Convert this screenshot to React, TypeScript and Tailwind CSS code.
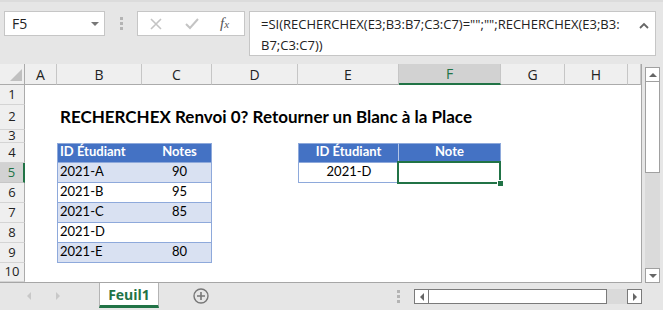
import React from 'react'

const COLS = ['A', 'B', 'C', 'D', 'E', 'F', 'G', 'H', '']
const ROWS = [1, 2, 3, 4, 5, 6, 7, 8, 9, 10]

const values: Record<string, string> = {
  B4: 'ID Étudiant',
  C4: 'Notes',
  E4: 'ID Étudiant',
  F4: 'Note',
  B5: '2021-A',
  C5: '90',
  B6: '2021-B',
  C6: '95',
  B7: '2021-C',
  C7: '85',
  B8: '2021-D',
  B9: '2021-E',
  C9: '80',
  E5: '2021-D',
}

// table formats, written out per cell
const formats: Record<string, string> = {
  B4: 'bg-[#4472c4] text-white font-bold border-t border-b border-l border-[#8ea9db] justify-start pl-[2px]',
  C4: 'bg-[#4472c4] text-white font-bold border-t border-b border-r border-[#8ea9db] justify-center pl-[6px]',
  B5: 'bg-[#d9e1f2] border-b border-l border-[#8ea9db] justify-start pl-[2px]',
  C5: 'bg-[#d9e1f2] border-b border-r border-[#8ea9db] justify-center pl-[6px]',
  B6: 'border-b border-l border-[#8ea9db] justify-start pl-[2px]',
  C6: 'border-b border-r border-[#8ea9db] justify-center pl-[6px]',
  B7: 'bg-[#d9e1f2] border-b border-l border-[#8ea9db] justify-start pl-[2px]',
  C7: 'bg-[#d9e1f2] border-b border-r border-[#8ea9db] justify-center pl-[6px]',
  B8: 'border-b border-l border-[#8ea9db] justify-start pl-[2px]',
  C8: 'border-b border-r border-[#8ea9db] justify-center pl-[6px]',
  B9: 'bg-[#d9e1f2] border-b border-l border-[#8ea9db] justify-start pl-[2px]',
  C9: 'bg-[#d9e1f2] border-b border-r border-[#8ea9db] justify-center pl-[6px]',
  E4: 'bg-[#4472c4] text-white font-bold border-t border-b border-l border-r border-[#8ea9db] border-r-[#b4c6e7] justify-center',
  F4: 'bg-[#4472c4] text-white font-bold border-t border-b border-r border-[#8ea9db] justify-center',
  E5: 'border-b border-l border-[#8ea9db] justify-center',
  F5: 'border-b border-r border-[#8ea9db] justify-center',
}

function Cell({ id }: { id: string }) {
  if (id === 'B2') {
    return (
      <div className="relative z-10 flex items-end pl-[3px] pb-[1px] whitespace-nowrap overflow-visible text-[17px] font-bold text-black">
        RECHERCHEX Renvoi 0? Retourner un Blanc à la Place
      </div>
    )
  }
  return (
    <div className={`relative flex items-end pb-[1px] whitespace-nowrap text-[13px] text-black ${formats[id] || ''}`}>
      {values[id]}
      {id === 'F5' && (
        <>
          <div className="absolute left-[-2px] top-[-2px] right-[-1px] bottom-[-2px] border-2 border-[#217346]" />
          <div className="absolute right-[-4px] bottom-[-5px] w-[7px] h-[7px] bg-[#217346] border border-white" />
        </>
      )}
    </div>
  )
}

function Tri({ dir, className }: { dir: 'up' | 'down' | 'left' | 'right'; className: string }) {
  const pts = {
    up: '0,6 4,2 8,6',
    down: '0,2 8,2 4,6',
    left: '6,0 6,8 2,4',
    right: '2,0 2,8 6,4',
  }[dir]
  return (
    <svg width="8" height="8" viewBox="0 0 8 8" className={className}>
      <polygon points={pts} fill="currentColor" />
    </svg>
  )
}

function Dots() {
  return (
    <div className="flex flex-col gap-[2px]">
      <span className="w-[3px] h-[3px] bg-[#b4b4b4]" />
      <span className="w-[3px] h-[3px] bg-[#b4b4b4]" />
      <span className="w-[3px] h-[3px] bg-[#b4b4b4]" />
    </div>
  )
}

export default function App() {
  return (
    <div className="w-[663px] h-[310px] bg-[#e6e6e6] flex flex-col overflow-hidden font-['Lato',sans-serif]">
      {/* formula bar */}
      <div className="h-[64px] flex items-start pt-[9px] border-t-2 border-[#dcdcdc] font-['Open_Sans',sans-serif]">
        <div className="ml-[4px] w-[101px] h-[25px] bg-white border border-[#c6c6c6] flex items-center justify-between pl-[7px] pr-[5px] text-[14px] text-[#222]">
          F5
          <Tri dir="down" className="text-[#777]" />
        </div>
        <div className="w-[32px] h-[25px] flex items-center justify-center">
          <Dots />
        </div>
        <div className="w-[108px] h-[25px] bg-white border border-[#c6c6c6] flex items-center">
          <svg width="12" height="12" viewBox="0 0 12 12" className="ml-[12px]">
            <path d="M1 1 L11 11 M11 1 L1 11" stroke="#c4c4c4" strokeWidth="1.6" />
          </svg>
          <svg width="14" height="12" viewBox="0 0 14 12" className="ml-[23px]">
            <path d="M1 6 L5 10 L13 1" stroke="#c4c4c4" strokeWidth="2" fill="none" />
          </svg>
          <span className="ml-[21px] font-['Liberation_Serif',serif] italic text-[15px] text-[#555] leading-none">
            f<span className="text-[11px]">x</span>
          </span>
        </div>
        <div className="ml-[4px] w-[407px] h-[45px] bg-white border border-[#c6c6c6] flex justify-between pl-[11px] pr-[6px] pt-[2px]">
          <div className="text-[13px] leading-[21px] text-[#222] whitespace-nowrap">
            =SI(RECHERCHEX(E3;B3:B7;C3:C7)="";"";RECHERCHEX(E3;B3:
            <br />
            B7;C3:C7))
          </div>
          <svg width="10" height="8" viewBox="0 0 10 8" className="mt-[8px]">
            <path d="M1 6 L5 2 L9 6" stroke="#666" strokeWidth="1.8" fill="none" />
          </svg>
        </div>
      </div>

      {/* sheet */}
      <div className="flex h-[219px]">
        <div className="w-[642px] bg-white border-r border-b border-[#a6a6a6] grid grid-cols-[25px_32px_85px_70px_86px_101px_102px_64px_63px_13px] grid-rows-[21px_20px_25px_13px_20px_20px_20px_20px_20px_20px_19px] overflow-hidden">
          <div className="bg-[#efefef] border-r border-b border-[#ababab] flex items-end justify-end pr-[2px] pb-[3px]">
            <svg width="12" height="12" viewBox="0 0 12 12">
              <polygon points="12,0 12,12 0,12" fill="#c0c0c0" />
            </svg>
          </div>
          {COLS.map((c) =>
            c === 'F' ? (
              <div key={c} className="bg-[#d2d2d2] border-r border-r-[#c6c6c6] border-b-2 border-b-[#217346] flex items-center justify-center text-[14px] text-[#217346] font-['Open_Sans',sans-serif]">
                {c}
              </div>
            ) : (
              <div key={c || 'x'} className="bg-[#efefef] border-r border-r-[#c6c6c6] border-b border-b-[#ababab] flex items-center justify-center text-[14px] text-[#222] font-['Open_Sans',sans-serif]">
                {c}
              </div>
            )
          )}
          {ROWS.map((r) => (
            <React.Fragment key={r}>
              {r === 5 ? (
                <div className="bg-[#d2d2d2] border-r-2 border-r-[#217346] border-b border-b-[#c6c6c6] flex items-center justify-center text-[13px] text-[#217346] font-['Open_Sans',sans-serif]">
                  {r}
                </div>
              ) : (
                <div className="bg-[#efefef] border-r border-r-[#ababab] border-b border-b-[#d4d4d4] flex items-center justify-center text-[13px] text-[#222] font-['Open_Sans',sans-serif]">
                  {r}
                </div>
              )}
              {COLS.map((c) => (
                <Cell key={c + r} id={c + r} />
              ))}
            </React.Fragment>
          ))}
        </div>

        {/* vertical scrollbar */}
        <div className="w-[21px] pl-[3px] pt-[3px] flex flex-col">
          <div className="w-[15px] h-[15px] bg-white border border-[#a0a0a0] flex items-center justify-center">
            <Tri dir="up" className="text-[#666]" />
          </div>
          <div className="w-[15px] h-[91px] bg-white border border-t-0 border-[#a0a0a0]" />
          <div className="w-[15px] flex-1 bg-[#dadada]" />
          <div className="w-[15px] h-[15px] bg-white border border-[#a0a0a0] flex items-center justify-center">
            <Tri dir="down" className="text-[#666]" />
          </div>
        </div>
      </div>

      {/* sheet tabs */}
      <div className="flex-1 flex items-start">
        <div className="pl-[14px] flex h-[26px] items-center">
          <div className="w-[29px] flex justify-center">
            <Tri dir="left" className="text-[#c8c8c8]" />
          </div>
          <div className="w-[29px] flex justify-center">
            <Tri dir="right" className="text-[#c8c8c8]" />
          </div>
        </div>
        <div className="ml-[27px] w-[60px] h-[25px] bg-white border-l border-r border-[#b4b4b4] border-b-[3px] border-b-[#217346] flex items-center justify-center text-[14px] font-bold text-[#217346] font-['Open_Sans',sans-serif]">
          Feuil1
        </div>
        <div className="w-[84px] h-[26px] flex items-center justify-center">
          <svg width="16" height="16" viewBox="0 0 16 16">
            <circle cx="8" cy="8" r="7" stroke="#777" strokeWidth="1.4" fill="none" />
            <path d="M8 4 V12 M4 8 H12" stroke="#777" strokeWidth="1.6" />
          </svg>
        </div>
        <div className="ml-[150px] w-[10px] h-[26px] flex items-center justify-center">
          <Dots />
        </div>
        <div className="ml-[11px] mt-[6px] w-[228px] h-[15px] flex">
          <div className="w-[15px] h-[15px] bg-white border border-[#7a7a7a] flex items-center justify-center">
            <Tri dir="left" className="text-[#666]" />
          </div>
          <div className="w-[177px] h-[15px] bg-white border-t border-b border-[#7a7a7a]" />
          <div className="flex-1 h-[15px] bg-[#dadada] border-l border-[#7a7a7a]" />
          <div className="w-[15px] h-[15px] bg-white border border-[#7a7a7a] flex items-center justify-center">
            <Tri dir="right" className="text-[#666]" />
          </div>
        </div>
      </div>
    </div>
  )
}
